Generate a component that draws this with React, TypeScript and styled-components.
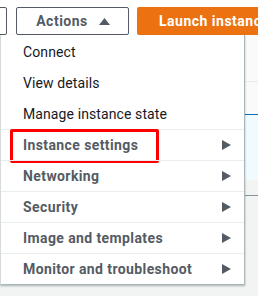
import styled, { createGlobalStyle } from "styled-components";

const GlobalStyle = createGlobalStyle`
  html, body {
    margin: 0;
    padding: 0;
    background: #f2f3f3;
    font-family: Roboto, "Liberation Sans", Arial, sans-serif;
    overflow: hidden;
  }
`;

const items = [
  { label: "Connect", group: false },
  { label: "View details", group: false },
  { label: "Manage instance state", group: false },
  { label: "Instance settings", group: true, highlight: true },
  { label: "Networking", group: true },
  { label: "Security", group: true },
  { label: "Image and templates", group: true },
  { label: "Monitor and troubleshoot", group: true },
];

export default function App() {
  return (
    <>
      <GlobalStyle />
      <StyledPage>
        <StyledToolbar>
          <StyledGhostButton />
          <StyledActionsButton>
            Actions
            <svg width="11" height="7" viewBox="0 0 11 7">
              <path d="M0 7 L5.5 0 L11 7 Z" fill="#545b64" />
            </svg>
          </StyledActionsButton>
          <StyledLaunchButton>Launch instances</StyledLaunchButton>
        </StyledToolbar>
        <StyledBody>
          <StyledMenu>
            {items.map((item) => (
              <StyledItem key={item.label} $group={item.group}>
                <span>{item.label}</span>
                {item.group && (
                  <svg width="9" height="10" viewBox="0 0 9 10">
                    <path d="M0 0 L9 5 L0 10 Z" fill="#545b64" />
                  </svg>
                )}
                {item.highlight && <StyledHighlight />}
              </StyledItem>
            ))}
          </StyledMenu>
          <StyledTable>
            <StyledRow $bg="#fafafa" $h={46} $line="#eaeded" />
            <StyledRow $bg="#fafafa" $h={32} $line="#0073bb" />
            <StyledRow $bg="#f1faff" $h={64} $line="#f1faff" />
            <StyledRow $bg="#f2f3f3" $h={15} $line="#879596" />
          </StyledTable>
        </StyledBody>
      </StyledPage>
    </>
  );
}

const StyledPage = styled.div`
  width: 258px;
  height: 296px;
  display: flex;
  flex-direction: column;
  overflow: hidden;
`;

const StyledToolbar = styled.div`
  height: 35px;
  box-sizing: border-box;
  padding-top: 7px;
  background: #fff;
  display: flex;
  align-items: stretch;
  gap: 9px;
  flex-shrink: 0;
`;

const StyledGhostButton = styled.div`
  width: 60px;
  margin-left: -53px;
  flex-shrink: 0;
  box-sizing: border-box;
  border: 1px solid #545b64;
  border-radius: 2px;
  background: #fff;
`;

const StyledActionsButton = styled.div`
  width: 113px;
  flex-shrink: 0;
  box-sizing: border-box;
  border: 1px solid #545b64;
  border-radius: 2px;
  background: #fff;
  color: #545b64;
  font-weight: 700;
  font-size: 14px;
  letter-spacing: 0.5px;
  display: flex;
  align-items: center;
  justify-content: center;
  gap: 11px;
  padding-left: 1px;
`;

const StyledLaunchButton = styled.div`
  width: 140px;
  flex-shrink: 0;
  margin-left: -1px;
  box-sizing: border-box;
  background: #ec7211;
  border-radius: 2px;
  color: #fff;
  font-weight: 700;
  font-size: 14px;
  letter-spacing: 0.5px;
  display: flex;
  align-items: center;
  padding-left: 22px;
  white-space: nowrap;
`;

const StyledBody = styled.div`
  display: flex;
  align-items: flex-start;
`;

const StyledMenu = styled.div`
  width: 245px;
  flex-shrink: 0;
  box-sizing: border-box;
  background: #fff;
  border-left: 1px solid #d5dbdb;
  border-right: 1px solid #aab7b8;
  border-bottom: 1px solid #aab7b8;
  padding-top: 1px;
  box-shadow: 0 1px 2px rgba(0, 28, 36, 0.3);
  position: relative;
  z-index: 1;
`;

const StyledItem = styled.div<{ $group: boolean }>`
  position: relative;
  height: 31px;
  box-sizing: border-box;
  display: flex;
  align-items: center;
  justify-content: space-between;
  padding: 0 13px 0 22px;
  font-size: 14px;
  font-weight: ${(p) => (p.$group ? 700 : 400)};
  letter-spacing: ${(p) => (p.$group ? "0.4px" : "0.1px")};
  color: ${(p) => (p.$group ? "#545b64" : "#16191f")};
  border-top: 1px solid ${(p) => (p.$group ? "#eaeded" : "transparent")};
`;

const StyledHighlight = styled.div`
  position: absolute;
  left: 9px;
  top: -1px;
  width: 149px;
  height: 34px;
  box-sizing: border-box;
  border: 3px solid #f00;
  border-radius: 2px;
`;

const StyledTable = styled.div`
  flex: 1;
  display: flex;
  flex-direction: column;
`;

const StyledRow = styled.div<{ $bg: string; $h: number; $line: string }>`
  height: ${(p) => p.$h}px;
  background: ${(p) => p.$bg};
  border-bottom: 1px solid ${(p) => p.$line};
`;
